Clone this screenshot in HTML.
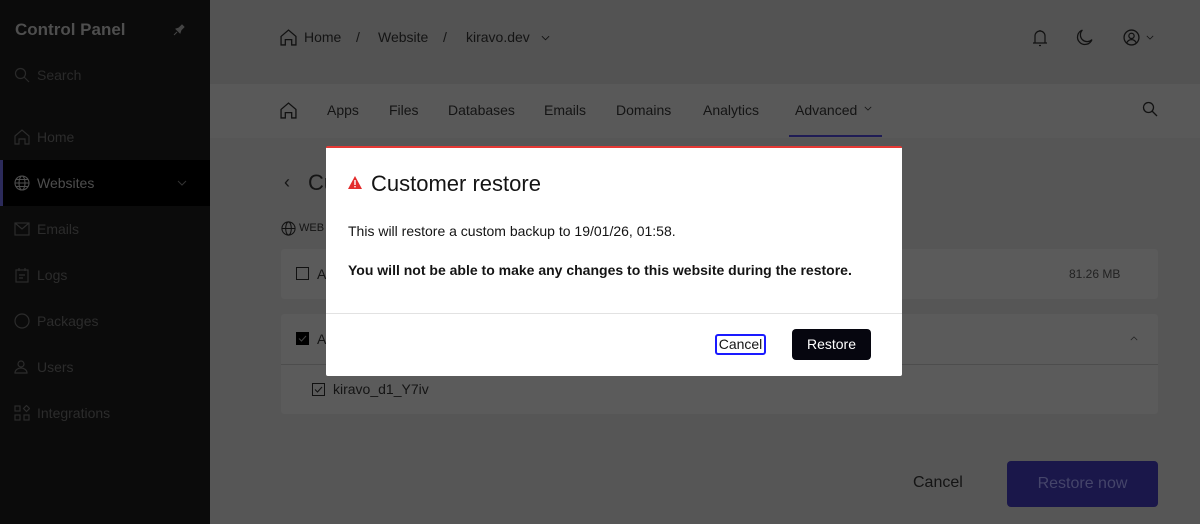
<!DOCTYPE html>
<html><head><meta charset="utf-8"><style>
*{box-sizing:border-box;margin:0;padding:0}
body{width:1200px;height:524px;overflow:hidden;position:relative;font-family:"Liberation Sans",sans-serif;background:#565656;color:#151515}
.abs{position:absolute}
.side{left:0;top:0;width:210px;height:524px;background:#0b0b0b;color:#2c2c2c}
.side .it{position:absolute;left:0;width:210px;height:46px;display:flex;align-items:center;padding-left:37px;font-size:14px;color:#2c2c2c}
.side svg{position:absolute;left:14px}
.hdr{left:210px;top:0;width:990px;height:84px;background:#535353}
.nav{left:210px;top:84px;width:990px;height:54px;background:#595959}
.t{position:absolute;font-size:14px;color:#141414;white-space:nowrap}
.card{background:#5b5b5b;border-radius:3px}
.modal{left:326px;top:146px;width:576px;height:230px;background:#fff;border-top:2px solid #e53935;border-radius:2px}
</style></head><body>
<div class="abs side">
  <div class="abs" style="left:15px;top:20px;font-size:17px;font-weight:bold;color:#4e4e4e">Control Panel</div>
  <svg style="left:173px;top:24px" width="12" height="12" viewBox="0 0 12 12"><path d="M4 8L1 11M3 5l4 4 1-3 3-3-2-2-3 3z" fill="#444" stroke="#444"/></svg>
  <svg style="top:67px" width="16" height="16" viewBox="0 0 16 16" fill="none" stroke="#2a2a2a" stroke-width="1.2"><circle cx="6.5" cy="6.5" r="5"/><path d="M10 10l5 5"/></svg>
  <div class="abs" style="left:37px;top:67px;font-size:14px;color:#2a2a2a">Search</div>
  <div class="it" style="top:114px"><svg width="16" height="16" viewBox="0 0 16 16" fill="none" stroke="#2c2c2c" stroke-width="1.2"><path d="M1 7L8 1l7 6v8h-4v-5H5v5H1z"/></svg>Home</div>
  <div class="it" style="top:160px;background:#000;color:#4e4e4e;border-left:3px solid #2b2a5a"><svg style="left:11px" width="16" height="16" viewBox="0 0 16 16" fill="none" stroke="#4e4e4e" stroke-width="1.1"><circle cx="8" cy="8" r="7"/><ellipse cx="8" cy="8" rx="3" ry="7"/><path d="M1 8h14M2 4.5h12M2 11.5h12"/></svg><span style="margin-left:-3px">Websites</span><svg style="left:174px" width="10" height="6" viewBox="0 0 10 6" fill="none" stroke="#333"><path d="M1 1l4 4 4-4"/></svg></div>
  <div class="it" style="top:206px"><svg width="16" height="14" viewBox="0 0 16 14" fill="none" stroke="#2c2c2c" stroke-width="1.2"><rect x="1" y="1" width="14" height="12"/><path d="M1 1l7 6 7-6"/></svg>Emails</div>
  <div class="it" style="top:252px"><svg width="16" height="16" viewBox="0 0 16 16" fill="none" stroke="#2c2c2c" stroke-width="1.2"><rect x="2" y="3" width="12" height="12"/><path d="M5 1v3M11 1v3M5 8h6M5 11h4"/></svg>Logs</div>
  <div class="it" style="top:298px"><svg width="16" height="16" viewBox="0 0 16 16" fill="none" stroke="#2c2c2c" stroke-width="1.2"><circle cx="8" cy="8" r="7"/></svg>Packages</div>
  <div class="it" style="top:344px"><svg width="16" height="16" viewBox="0 0 16 16" fill="none" stroke="#2c2c2c" stroke-width="1.2"><circle cx="7" cy="5" r="3"/><path d="M1 14c0-3 3-5 6-5s6 2 6 5z"/></svg>Users</div>
  <div class="it" style="top:390px"><svg width="16" height="16" viewBox="0 0 16 16" fill="none" stroke="#2c2c2c" stroke-width="1.2"><rect x="1" y="1" width="5" height="5"/><rect x="1" y="10" width="5" height="5"/><rect x="10" y="10" width="5" height="5"/><path d="M12.5 0.5l3 3-3 3-3-3z"/></svg>Integrations</div>
</div>
<div class="abs hdr">
  <svg class="abs" style="left:70px;top:29px" width="17" height="17" viewBox="0 0 16 16" fill="none" stroke="#111" stroke-width="1.2"><path d="M1 7L8 1l7 6v8h-4v-5H5v5H1z"/></svg>
  <div class="t" style="left:94px;top:29px">Home</div>
  <div class="t" style="left:146px;top:29px">/</div>
  <div class="t" style="left:168px;top:29px">Website</div>
  <div class="t" style="left:233px;top:29px">/</div>
  <div class="t" style="left:256px;top:29px">kiravo.dev</div>
  <svg class="abs" style="left:331px;top:35px" width="9" height="6" viewBox="0 0 10 6" fill="none" stroke="#111"><path d="M1 1l4 4 4-4"/></svg>
  <svg class="abs" style="left:822px;top:29px" width="16" height="18" viewBox="0 0 16 18" fill="none" stroke="#111" stroke-width="1.2"><path d="M3 14V7a5 5 0 0110 0v7zM1 14h14M7 16.5h2M8 1v1"/></svg>
  <svg class="abs" style="left:866px;top:29px" width="17" height="17" viewBox="0 0 16 16" fill="none" stroke="#111" stroke-width="1.2"><path d="M6 1a7 7 0 109 9A6 6 0 016 1z"/></svg>
  <svg class="abs" style="left:913px;top:29px" width="17" height="17" viewBox="0 0 16 16" fill="none" stroke="#111" stroke-width="1.2"><circle cx="8" cy="8" r="7"/><circle cx="8" cy="6.5" r="2.5"/><path d="M3.5 13c1-2 3-3 4.5-3s3.5 1 4.5 3"/></svg>
  <svg class="abs" style="left:936px;top:35px" width="8" height="5" viewBox="0 0 10 6" fill="none" stroke="#111"><path d="M1 1l4 4 4-4"/></svg>
</div>
<div class="abs nav">
  <svg class="abs" style="left:70px;top:18px" width="17" height="17" viewBox="0 0 16 16" fill="none" stroke="#111" stroke-width="1.2"><path d="M1 7L8 1l7 6v8h-4v-5H5v5H1z"/></svg>
  <div class="t" style="left:117px;top:18px">Apps</div>
  <div class="t" style="left:179px;top:18px">Files</div>
  <div class="t" style="left:238px;top:18px">Databases</div>
  <div class="t" style="left:334px;top:18px">Emails</div>
  <div class="t" style="left:406px;top:18px">Domains</div>
  <div class="t" style="left:493px;top:18px">Analytics</div>
  <div class="t" style="left:585px;top:18px">Advanced</div>
  <svg class="abs" style="left:654px;top:22px" width="8" height="5" viewBox="0 0 10 6" fill="none" stroke="#111"><path d="M1 1l4 4 4-4"/></svg>
  <div class="abs" style="left:579px;top:51px;width:93px;height:2px;background:#1f1c55"></div>
  <svg class="abs" style="left:932px;top:17px" width="16" height="16" viewBox="0 0 16 16" fill="none" stroke="#111" stroke-width="1.3"><circle cx="6.5" cy="6.5" r="5"/><path d="M10 10l5 5"/></svg>
</div>
<div class="t" style="left:284px;top:172px;font-size:18px">‹</div>
<div class="t" style="left:308px;top:170px;font-size:22px">Cu</div>
<svg class="abs" style="left:281px;top:221px" width="15" height="15" viewBox="0 0 16 16" fill="none" stroke="#111" stroke-width="1.1"><circle cx="8" cy="8" r="7"/><ellipse cx="8" cy="8" rx="3" ry="7"/><path d="M1 8h14"/></svg>
<div class="t" style="left:299px;top:222px;font-size:11px">WEB</div>
<div class="abs card" style="left:281px;top:249px;width:877px;height:50px"></div>
<div class="abs" style="left:296px;top:267px;width:13px;height:13px;border:1px solid #111"></div>
<div class="t" style="left:317px;top:266px">A</div>
<div class="t" style="left:1069px;top:267px;font-size:12px;color:#222">81.26 MB</div>
<div class="abs card" style="left:281px;top:314px;width:877px;height:100px"></div>
<div class="abs" style="left:281px;top:364px;width:877px;height:1px;background:#4d4d4d"></div>
<svg class="abs" style="left:296px;top:332px" width="13" height="13" viewBox="0 0 13 13"><rect width="13" height="13" fill="#000"/><path d="M3 6.5l2.5 2.5 4.5-5" fill="none" stroke="#444" stroke-width="1"/></svg>
<div class="t" style="left:317px;top:331px">A</div>
<svg class="abs" style="left:1130px;top:336px" width="8" height="5" viewBox="0 0 10 6" fill="none" stroke="#222"><path d="M1 5l4-4 4 4"/></svg>
<svg class="abs" style="left:312px;top:383px" width="13" height="13" viewBox="0 0 13 13" fill="none" stroke="#111"><rect x="0.5" y="0.5" width="12" height="12"/><path d="M3 6.5l2.5 2.5 4.5-5"/></svg>
<div class="t" style="left:333px;top:381px">kiravo_d1_Y7iv</div>
<div class="t" style="left:913px;top:474px;font-size:16px">Cancel</div>
<div class="abs" style="left:1007px;top:461px;width:151px;height:46px;background:#1a174a;border-radius:4px;color:#45456a;font-size:16px;text-align:center;line-height:46px">Restore now</div>

<div class="abs modal">
  <svg class="abs" style="left:22px;top:28px" width="14" height="13" viewBox="0 0 14 13"><path d="M7 0L14 13H0z" fill="#e32b2b"/><rect x="6.3" y="4" width="1.4" height="5" fill="#fff"/><rect x="6.3" y="10" width="1.4" height="1.4" fill="#fff"/></svg>
  <div class="t" style="left:45px;top:23px;font-size:22px">Customer restore</div>
  <div class="t" style="left:22px;top:75px;font-size:14px">This will restore a custom backup to 19/01/26, 01:58.</div>
  <div class="t" style="left:22px;top:114px;font-size:14px;font-weight:bold">You will not be able to make any changes to this website during the restore.</div>
  <div class="abs" style="left:0;top:165px;width:576px;height:1px;background:#e2e2e2"></div>
  <div class="abs" style="left:389px;top:186px;width:51px;height:21px;border:2px solid #1a1aff;border-radius:3px;font-size:14px;text-align:center;line-height:17px">Cancel</div>
  <div class="abs" style="left:466px;top:181px;width:79px;height:31px;background:#06060f;border-radius:4px;color:#fff;font-size:14px;text-align:center;line-height:31px">Restore</div>
</div>
</body></html>
